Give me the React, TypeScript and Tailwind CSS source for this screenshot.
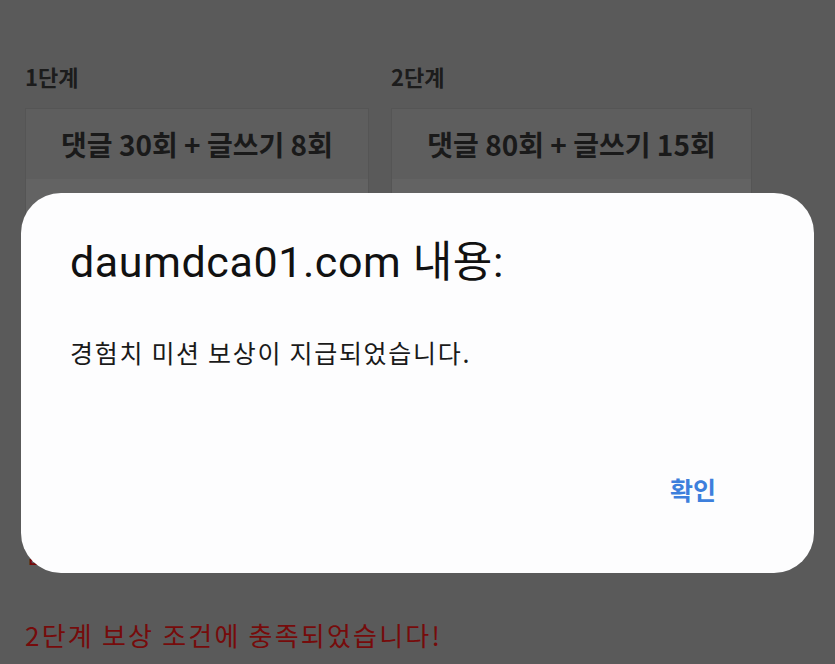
export default function App() {
  const cjk = { fontFamily: '"Noto Sans CJK KR", "Noto Sans", sans-serif' }
  const title = { fontFamily: 'Roboto, "Noto Sans CJK KR", sans-serif' }

  return (
    <div className="relative h-[664px] w-[835px] overflow-hidden bg-[#5a5a5a]" style={cjk}>
      {/* dimmed page underneath */}
      <div className="flex flex-col px-[25px] pt-[60px]">
        <div className="flex gap-[22px]">
          <div className="flex w-[344px] flex-col">
            <div className="text-[22px] font-bold leading-[32px] text-[#1c1c1c]">1단계</div>
            <div className="mt-[16px] flex h-[412px] flex-col border border-[#555555] bg-[#636363]">
              <div className="flex h-[70px] items-center justify-center bg-[#5e5e5e] text-[28px] font-bold text-[#1a1a1a]">
                댓글 30회 + 글쓰기 8회
              </div>
            </div>
          </div>
          <div className="flex w-[361px] flex-col">
            <div className="text-[22px] font-bold leading-[32px] text-[#1c1c1c]">2단계</div>
            <div className="mt-[16px] flex h-[412px] flex-col border border-[#555555] bg-[#636363]">
              <div className="flex h-[70px] items-center justify-center bg-[#5e5e5e] text-[28px] font-bold text-[#1a1a1a]">
                댓글 80회 + 글쓰기 15회
              </div>
            </div>
          </div>
        </div>
        <div className="mt-[14px] text-[26px] leading-[36px] tracking-[2.2px] text-[#760b0b]">달성 보상 조건에 충족되었습니다!</div>
        <div className="mt-[47px] text-[26px] leading-[36px] tracking-[2.2px] text-[#760b0b]">2단계 보상 조건에 충족되었습니다!</div>
      </div>

      {/* alert dialog */}
      <div className="absolute left-[21px] top-[193px] flex h-[380px] w-[793px] flex-col rounded-[40px] bg-[#fdfdfe] pl-[49px] pr-[98px] pt-[43px]">
        <div className="text-[43px] leading-[52px] tracking-[0.6px] text-[#111111]" style={title}>
          daumdca01.com 내용:
        </div>
        <div className="mt-[46px] text-[25px] leading-[36px] tracking-[1.7px] text-[#1a1a1a]">경험치 미션 보상이 지급되었습니다.</div>
        <div className="mt-[102px] flex justify-end">
          <button className="text-[25px] font-bold leading-[34px] text-[#3d7fdc]">확인</button>
        </div>
      </div>
    </div>
  )
}
